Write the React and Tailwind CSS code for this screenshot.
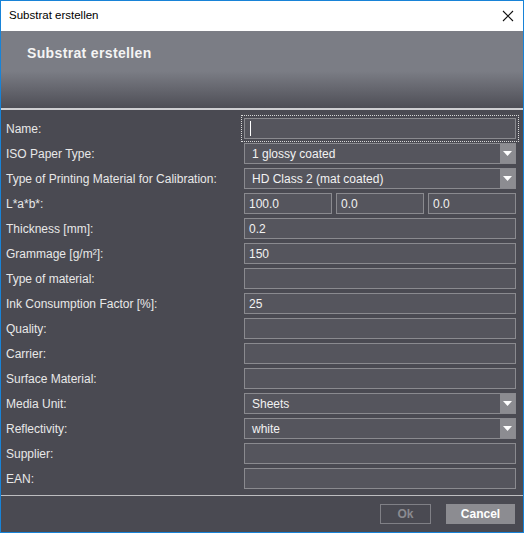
import React from "react";

const Arrow = () => (
  <div className="absolute right-0 top-0 bottom-0 w-[15px] bg-[#8c8c91] flex items-center justify-center">
    <svg width="9" height="5" viewBox="0 0 9 5">
      <polygon points="0,0 9,0 4.5,5" fill="#ffffff" />
    </svg>
  </div>
);

const Field = ({ value = "", combo = false, focus = false }) => (
  <div
    className={
      "relative h-[21px] border border-[#8a8a8f] bg-[#55555d] flex items-center text-[12px] text-[#f2f2f2] " +
      (combo ? "pl-[7px]" : "pl-[4px]") +
      (focus ? " outline outline-1 outline-dotted outline-offset-[2px] outline-[#d8d8d8]" : "")
    }
  >
    {focus && <div className="w-[1px] h-[15px] bg-white ml-[1px]" />}
    <span className="leading-none">{value}</span>
    {combo && <Arrow />}
  </div>
);

const rows = [
  ["Name:", <Field focus />],
  ["ISO Paper Type:", <Field value="1 glossy coated" combo />],
  ["Type of Printing Material for Calibration:", <Field value="HD Class 2 (mat coated)" combo />],
  [
    "L*a*b*:",
    <div className="grid grid-cols-3 gap-[4px]">
      <Field value="100.0" />
      <Field value="0.0" />
      <Field value="0.0" />
    </div>,
  ],
  ["Thickness [mm]:", <Field value="0.2" />],
  ["Grammage [g/m²]:", <Field value="150" />],
  ["Type of material:", <Field />],
  ["Ink Consumption Factor [%]:", <Field value="25" />],
  ["Quality:", <Field />],
  ["Carrier:", <Field />],
  ["Surface Material:", <Field />],
  ["Media Unit:", <Field value="Sheets" combo />],
  ["Reflectivity:", <Field value="white" combo />],
  ["Supplier:", <Field />],
  ["EAN:", <Field />],
];

export default function App() {
  return (
    <div
      className="w-[524px] h-[533px] border border-[#1883d7] flex flex-col bg-[#4a4a52] overflow-hidden"
      style={{ fontFamily: '"Liberation Sans", Arial, sans-serif' }}
    >
      <div className="h-[30px] bg-white flex items-center justify-between pl-[8px] pr-[9px] shrink-0">
        <span className="text-[11.5px] text-black">Substrat erstellen</span>
        <svg width="12" height="12" viewBox="0 0 12 12">
          <path d="M1 1 L11 11 M11 1 L1 11" stroke="#111" strokeWidth="1.1" />
        </svg>
      </div>
      <div className="h-[77px] shrink-0 bg-[linear-gradient(to_bottom,#7b7d85_0%,#7b7d85_52%,#4e4e56_100%)] pl-[26px] pt-[10px]">
        <span className="text-[14px] font-bold tracking-[0.35px] text-[#f4f4f4]">Substrat erstellen</span>
      </div>
      <div className="h-[2px] bg-[#cfcfd2] shrink-0" />
      <div className="pt-[8px] pl-[5px] grid grid-cols-[238px_272px] gap-y-[4px] shrink-0">
        {rows.map(([label, field], i) => (
          <React.Fragment key={i}>
            <div className="h-[21px] flex items-center text-[12px] text-[#e8e8e8]">{label}</div>
            {field}
          </React.Fragment>
        ))}
      </div>
      <div className="mt-[6px] h-[1px] bg-[#bdbdc0] shrink-0" />
      <div className="flex-1 flex justify-end items-start pt-[8px] pr-[8px] gap-[15px]">
        <div className="w-[51px] h-[20px] border border-[#808086] flex items-center justify-center text-[12px] font-bold text-[#8a8a90]">
          Ok
        </div>
        <div className="w-[69px] h-[20px] bg-[#8c8c91] flex items-center justify-center text-[12px] font-bold text-white">
          Cancel
        </div>
      </div>
    </div>
  );
}
